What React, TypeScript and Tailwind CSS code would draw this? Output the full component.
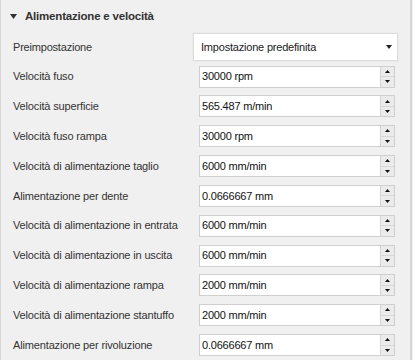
import React from "react";

const rows: [string, string][] = [
  ["Velocità fuso", "30000 rpm"],
  ["Velocità superficie", "565.487 m/min"],
  ["Velocità fuso rampa", "30000 rpm"],
  ["Velocità di alimentazione taglio", "6000 mm/min"],
  ["Alimentazione per dente", "0.0666667 mm"],
  ["Velocità di alimentazione in entrata", "6000 mm/min"],
  ["Velocità di alimentazione in uscita", "6000 mm/min"],
  ["Velocità di alimentazione rampa", "2000 mm/min"],
  ["Velocità di alimentazione stantuffo", "2000 mm/min"],
  ["Alimentazione per rivoluzione", "0.0666667 mm"],
];

function Up() {
  return (
    <svg width="5" height="3" viewBox="0 0 5 3">
      <path d="M2.5 0 L5 3 L0 3 Z" fill="#111" />
    </svg>
  );
}
function Down() {
  return (
    <svg width="5" height="3" viewBox="0 0 5 3">
      <path d="M0 0 L5 0 L2.5 3 Z" fill="#111" />
    </svg>
  );
}

export default function App() {
  return (
    <div
      className="w-[413px] h-[360px] overflow-hidden bg-[#f0f0f0] border-l border-l-[#d6d6d6] flex"
      style={{ fontFamily: '"Liberation Sans", Arial, sans-serif' }}
    >
      <div className="w-[409px] flex flex-col">
        <div className="h-[33px] flex items-center pl-[9px] gap-[8px]">
          <svg width="7" height="5" viewBox="0 0 7 5">
            <path d="M0 0 L7 0 L3.5 5 Z" fill="#333" />
          </svg>
          <span className="text-[11.5px] font-bold text-[#333] tracking-[-0.2px]">Alimentazione e velocità</span>
        </div>
        <div className="h-[29px] flex items-center">
          <span className="w-[192px] pl-[12px] text-[11px] text-[#333] tracking-[-0.2px]">Preimpostazione</span>
          <div className="w-[205px] h-[28px] bg-white border border-[#dcdcdc] shadow-[0_0_0_1px_#ececec] flex items-center justify-between pl-[7px] pr-[5px]">
            <span className="text-[11px] text-[#222] tracking-[-0.2px]">Impostazione predefinita</span>
            <svg width="6" height="4" viewBox="0 0 6 4">
              <path d="M0 0 L6 0 L3 4 Z" fill="#222" />
            </svg>
          </div>
        </div>
        {rows.map(([label, value]) => (
          <div key={label} className="h-[30px] flex items-center">
            <span className="w-[198px] pl-[12px] text-[11px] text-[#333] tracking-[-0.15px] whitespace-nowrap">{label}</span>
            <div className="w-[196px] h-[22px] bg-white border border-[#cfcfcf] flex">
              <span className="flex-1 flex items-center pl-[2px] text-[11px] text-[#111] tracking-[-0.2px]">{value}</span>
              <div className="w-[14px] flex flex-col bg-[#ebebeb] border-l border-l-[#d4d4d4]">
                <div className="flex-1 flex items-center justify-center border-b border-b-[#d8d8d8]">
                  <Up />
                </div>
                <div className="flex-1 flex items-center justify-center">
                  <Down />
                </div>
              </div>
            </div>
          </div>
        ))}
      </div>
      <div className="w-[2px] h-full bg-[#d6d6d6]" />
    </div>
  );
}
